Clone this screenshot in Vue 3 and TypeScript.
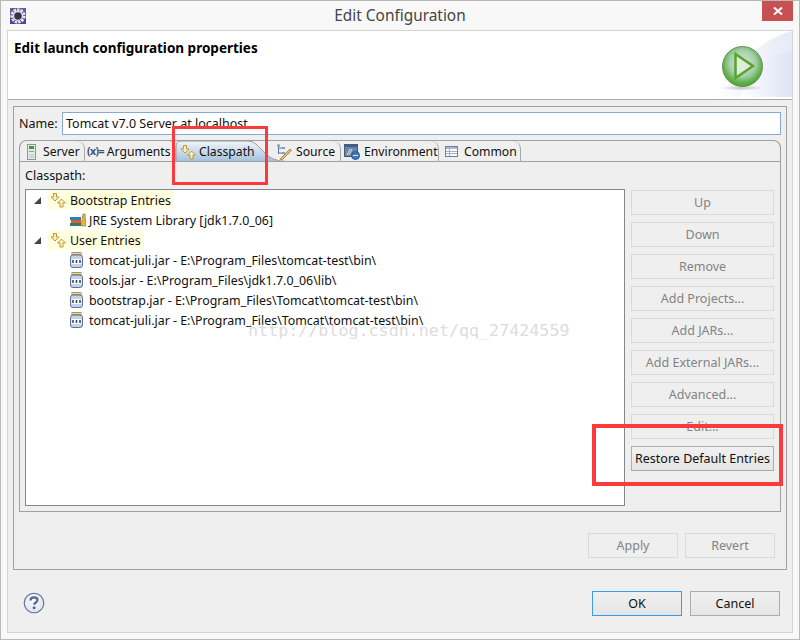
<script setup lang="ts">
const sideButtons = [
  'Up', 'Down', 'Remove', 'Add Projects...', 'Add JARs...',
  'Add External JARs...', 'Advanced...', 'Edit...'
]
const jars = [
  'tomcat-juli.jar - E:\\Program_Files\\tomcat-test\\bin\\',
  'tools.jar - E:\\Program_Files\\jdk1.7.0_06\\lib\\',
  'bootstrap.jar - E:\\Program_Files\\Tomcat\\tomcat-test\\bin\\',
  'tomcat-juli.jar - E:\\Program_Files\\Tomcat\\tomcat-test\\bin\\'
]
</script>

<template>
  <div class="window">
    <div class="titlebar">
      <svg class="app-icon" width="16" height="16" viewBox="0 0 16 16">
        <rect width="16" height="16" fill="#6a5a9c" />
        <rect y="10" width="16" height="6" fill="#5a3f92" />
        <circle cx="8" cy="8" r="6.300" fill="none" stroke="#ecebef" stroke-width="2.400" stroke-dasharray="2.500 1" />
        <circle cx="8" cy="8" r="5" fill="#f0eff3" />
        <circle cx="8" cy="8" r="3.800" fill="#35324a" />
      </svg>
      <div class="title">Edit Configuration</div>
      <div class="close">
        <svg width="10" height="10" viewBox="0 0 10 10">
          <path d="M1 1.500 9 8.500M9 1.500 1 8.500" stroke="#fff" stroke-width="2" />
        </svg>
      </div>
    </div>
    <div class="client">
      <div class="banner">
        <div class="banner-text">Edit launch configuration properties</div>
        <svg class="banner-art" width="78" height="68" viewBox="0 0 78 68">
          <defs>
            <linearGradient id="swoosh" x1="0" y1="0" x2="1" y2="0">
              <stop offset="0" stop-color="#fff" />
              <stop offset="1" stop-color="#e6eaf7" />
            </linearGradient>
            <linearGradient id="swoosh2" x1="0" y1="0" x2="1" y2="0">
              <stop offset="0" stop-color="#fff" />
              <stop offset="1" stop-color="#dde3f5" />
            </linearGradient>
            <radialGradient id="ball" cx="0.5" cy="0.42" r="0.6">
              <stop offset="0" stop-color="#d6e9d8" />
              <stop offset="0.55" stop-color="#a4cfa8" />
              <stop offset="0.82" stop-color="#5cb04a" />
              <stop offset="1" stop-color="#4ea322" />
            </radialGradient>
            <radialGradient id="shadow" cx="0.5" cy="0.5" r="0.5">
              <stop offset="0" stop-color="#999" stop-opacity="0.6" />
              <stop offset="1" stop-color="#999" stop-opacity="0" />
            </radialGradient>
          </defs>
          <path d="M0 66C20 56 28 30 40 20 52 10 66 3 78 0V66Z" fill="url(#swoosh)" />
          <path d="M26 66C36 46 40 28 52 25 60 23 70 22 78 21V66Z" fill="url(#swoosh2)" />
          <ellipse cx="28" cy="57" rx="22" ry="2.500" fill="url(#shadow)" />
          <circle cx="28.500" cy="35.500" r="20" fill="url(#ball)" stroke="#6d8f55" stroke-width="1" />
          <path d="M21.500 23 39 35 21.500 47Z" fill="#dcefd8" stroke="#5aa32e" stroke-width="2.500" />
        </svg>
      </div>
      <div class="body">
        <div class="group">
          <div class="name-row">
            <label class="name-label">Name:</label>
            <div class="name-input">Tomcat v7.0 Server at localhost</div>
          </div>
          <div class="folder">
            <div class="tabs">
              <div class="tab tab-server">
                <svg class="tab-icon" width="10" height="16" viewBox="0 0 10 16">
                  <rect x="0.500" y="0.500" width="8" height="15" fill="#e4ebe0" stroke="#8a9a86" />
                  <rect x="2" y="2" width="5" height="3" fill="#3d9a4a" />
                  <rect x="2" y="7" width="5" height="1" fill="#8aa0b0" />
                  <rect x="2" y="10" width="5" height="4" fill="#c8d6e6" />
                </svg>
                <span>Server</span>
              </div>
              <div class="tab tab-args">
                <span class="args-glyph">(x)=</span>
                <span>Arguments</span>
              </div>
              <div class="tab tab-active">
                <svg class="active-bg" width="108" height="22" viewBox="0 0 108 22">
                  <defs>
                    <linearGradient id="act" x1="0" y1="0" x2="0" y2="1">
                      <stop offset="0" stop-color="#f2f5f9" />
                      <stop offset="1" stop-color="#a3bfdc" />
                    </linearGradient>
                  </defs>
                  <path d="M0 22V6Q0 1 6 1H72C84 1 86 18 104 21H0Z" fill="url(#act)" />
                  <path d="M0 22V6Q0 1 6 1H72C84 1 86 18 104 21H108" fill="none" stroke="#9a9a9a" />
                </svg>
                <svg class="tab-icon icon-entry" width="16" height="16" viewBox="0 0 16 16">
                  <path d="M3.500 1.500h3V5H9L5 9 1 5h2.500Z" fill="#fbeeb8" stroke="#b89a40" />
                  <path d="M11.500 7 15.500 11H13v4h-3v-4H7.500Z" fill="#fbeeb8" stroke="#b89a40" />
                </svg>
                <span class="tab-label">Classpath</span>
              </div>
              <div class="tab tab-source">
                <svg class="tab-icon" width="16" height="16" viewBox="0 0 16 16">
                  <path d="M2.500 1v9M2.500 4H6M2.500 9H6" stroke="#5a7aa8" fill="none" />
                  <rect x="1" y="0.500" width="3" height="2" fill="#7f9cc4" />
                  <rect x="6" y="3" width="3" height="2" fill="#7f9cc4" />
                  <rect x="6" y="8" width="3" height="2" fill="#7f9cc4" />
                  <path d="M5 14 14 5l1.500 1.500-9 9L4 16Z" fill="#e3bd6a" stroke="#8e6f2c" stroke-width="0.700" />
                </svg>
                <span>Source</span>
              </div>
              <div class="tab tab-env">
                <svg class="tab-icon" width="16" height="16" viewBox="0 0 16 16">
                  <rect x="0.500" y="0.500" width="13" height="12" fill="#6f84a3" stroke="#445a7c" />
                  <rect x="1" y="1" width="12" height="2" fill="#3c5f96" />
                  <path d="M3 11 6 5M5 11 8 5" stroke="#dfe6f0" />
                  <circle cx="11.500" cy="11.500" r="4" fill="#3d78b8" stroke="#2d5a90" />
                  <rect x="9" y="11" width="5" height="1" fill="#dfe8f2" />
                </svg>
                <span>Environment</span>
              </div>
              <div class="tab tab-common">
                <svg class="tab-icon" width="14" height="12" viewBox="0 0 14 12">
                  <rect x="0.500" y="0.500" width="12" height="10" fill="#fff" stroke="#6c7f99" />
                  <rect x="1" y="1" width="11" height="2" fill="#a9b8cc" />
                  <path d="M1 5.500h11M1 7.500h11M4.500 3v7" stroke="#9fb0c6" />
                </svg>
                <span>Common</span>
              </div>
            </div>
            <div class="tab-page">
              <div class="cp-label">Classpath:</div>
              <div class="cp-main">
                <div class="tree">
                  <div class="row">
                    <span class="arrow"></span>
                    <span class="hl">
                      <svg class="tab-icon icon-entry" width="16" height="16" viewBox="0 0 16 16">
                        <path d="M3.500 1.500h3V5H9L5 9 1 5h2.500Z" fill="#fbeeb8" stroke="#b89a40" />
                        <path d="M11.500 7 15.500 11H13v4h-3v-4H7.500Z" fill="#fbeeb8" stroke="#b89a40" />
                      </svg>
                      Bootstrap Entries
                    </span>
                  </div>
                  <div class="row child">
                    <svg class="leaf-icon" width="16" height="14" viewBox="0 0 16 14">
                      <rect x="0" y="10" width="11" height="3" fill="#3f7a5a" />
                      <rect x="1" y="7" width="10" height="3" fill="#c8653a" />
                      <rect x="0" y="4" width="11" height="3" fill="#3c7aa8" />
                      <path d="M11 13 13 1h2l1 12Z" fill="#e3b53a" stroke="#8e6f2c" stroke-width="0.600" />
                    </svg>
                    <span>JRE System Library [jdk1.7.0_06]</span>
                  </div>
                  <div class="row">
                    <span class="arrow"></span>
                    <span class="hl">
                      <svg class="tab-icon icon-entry" width="16" height="16" viewBox="0 0 16 16">
                        <path d="M3.500 1.500h3V5H9L5 9 1 5h2.500Z" fill="#fbeeb8" stroke="#b89a40" />
                        <path d="M11.500 7 15.500 11H13v4h-3v-4H7.500Z" fill="#fbeeb8" stroke="#b89a40" />
                      </svg>
                      User Entries
                    </span>
                  </div>
                  <div v-for="jar in jars" :key="jar" class="row child">
                    <svg class="leaf-icon" width="16" height="16" viewBox="0 0 16 16">
                      <rect x="2" y="0.500" width="9" height="2" fill="#e6d9a8" stroke="#a89650" />
                      <rect x="0.500" y="3" width="12" height="12.500" rx="2.500" fill="#c4d3e6" stroke="#5e7396" />
                      <rect x="1.500" y="7" width="10" height="5" fill="#fff" />
                      <path d="M3 8v3M6.500 8v3M10 8v3" stroke="#28406a" stroke-width="1.500" />
                    </svg>
                    <span>{{ jar }}</span>
                  </div>
                </div>
                <div class="side">
                  <button v-for="b in sideButtons" :key="b" class="btn disabled" type="button">{{ b }}</button>
                  <button class="btn enabled" type="button">Restore Default Entries</button>
                </div>
              </div>
            </div>
          </div>
          <div class="apply-row">
            <button class="btn disabled apply" type="button">Apply</button>
            <button class="btn disabled apply" type="button">Revert</button>
          </div>
        </div>
        <div class="footer">
          <svg class="help" width="22" height="22" viewBox="0 0 22 22">
            <defs>
              <radialGradient id="helpbg" cx="0.5" cy="0.4" r="0.6">
                <stop offset="0" stop-color="#fbfbfd" />
                <stop offset="1" stop-color="#dfe3ea" />
              </radialGradient>
            </defs>
            <circle cx="11" cy="11" r="9.800" fill="url(#helpbg)" stroke="#56709a" stroke-width="1.100" />
            <path d="M7.500 8.500C7.500 6 9.300 5.300 11 5.300c2 0 3.500 1 3.500 2.800 0 2.400-3.300 2.400-3.300 4.700" fill="none" stroke="#516a94" stroke-width="2.200" />
            <circle cx="11.100" cy="15.700" r="1.500" fill="#516a94" />
          </svg>
          <div class="footer-buttons">
            <button class="btn enabled primary dlg" type="button">OK</button>
            <button class="btn enabled dlg" type="button">Cancel</button>
          </div>
        </div>
      </div>
    </div>
    <div class="red red-a"></div>
    <div class="red red-b"></div>
    <div class="watermark">http://blog.csdn.net/qq_27424559</div>
  </div>
</template>

<style scoped>
.window {
  position: relative;
  box-sizing: border-box;
  width: 800px;
  height: 640px;
  border: 1px solid #b9b9b9;
  background: #f8f8f8;
  display: flex;
  flex-direction: column;
  font-family: "Noto Sans", "Open Sans", sans-serif;
  font-size: 12.5px;
  color: #111;
  overflow: hidden;
}
.titlebar {
  height: 29px;
  flex: none;
  display: flex;
  align-items: flex-start;
  position: relative;
}
.app-icon {
  margin: 7px 0 0 9px;
}
.title {
  position: absolute;
  left: 0;
  right: 0;
  top: 4px;
  text-align: center;
  font-size: 15.400px;
  line-height: 22px;
  color: #444;
}
.close {
  position: absolute;
  right: 6px;
  top: 0;
  width: 31px;
  height: 20px;
  background: #c75050;
  display: flex;
  align-items: center;
  justify-content: center;
}
.client {
  flex: 1;
  margin: 0 6px 6px 6px;
  border: 1px solid #d4d4d4;
  display: flex;
  flex-direction: column;
  background: #efefef;
}
.banner {
  height: 68px;
  flex: none;
  background: #fff;
  border-bottom: 1px solid #a8a8a8;
  position: relative;
  overflow: hidden;
}
.banner-text {
  font-weight: 700;
  font-size: 13.500px;
  padding: 7px 0 0 6px;
  line-height: 20px;
  color: #000;
}
.banner-art {
  position: absolute;
  right: 0;
  top: 0;
}
.body {
  flex: 1;
  display: flex;
  flex-direction: column;
  padding: 6px 5px 0 5px;
}
.group {
  box-sizing: border-box;
  height: 464px;
  border: 1px solid #a0a0a0;
  padding: 5px 5px 0 5px;
}
.name-row {
  display: flex;
  align-items: center;
  height: 23px;
}
.name-label {
  width: 43px;
  flex: none;
}
.name-input {
  flex: 1;
  box-sizing: border-box;
  height: 23px;
  border: 1px solid #86a9d6;
  background: #fff;
  padding-left: 3px;
  line-height: 21px;
  white-space: nowrap;
}
.folder {
  margin-top: 5px;
  box-sizing: border-box;
  height: 372px;
  border: 1px solid #a0a0a0;
  border-top: none;
  border-radius: 8px 8px 0 0;
  display: flex;
  flex-direction: column;
}
.tabs {
  height: 22px;
  flex: none;
  display: flex;
  position: relative;
  box-sizing: border-box;
  margin: 0 -1px;
  border: 1px solid #a0a0a0;
  border-radius: 8px 8px 0 0;
  font-size: 12.200px;
}
.tab {
  box-sizing: border-box;
  height: 21px;
  display: flex;
  align-items: center;
  position: relative;
  white-space: nowrap;
  border-right: 1px solid #a8a8a8;
  border-top-right-radius: 8px;
}
.tab-icon,
.leaf-icon {
  flex: none;
}
.tab-server {
  width: 65px;
  padding-left: 7px;
  gap: 6px;
}
.tab-args {
  width: 91px;
  padding-left: 2px;
  gap: 3px;
}
.args-glyph {
  font-size: 10.500px;
  font-weight: 700;
  color: #3d4f78;
  letter-spacing: -0.6px;
  position: relative;
  top: -1px;
}
.tab-active {
  width: 92px;
  padding-left: 4px;
  gap: 3px;
  border-right: none;
  z-index: 1;
}
.active-bg {
  position: absolute;
  left: 0;
  top: -1px;
}
.tab-label {
  position: relative;
}
.icon-entry {
  position: relative;
}
.tab-source {
  width: 73px;
  padding-left: 8px;
  gap: 4px;
}
.tab-env {
  width: 98px;
  padding-left: 3px;
  gap: 4px;
}
.tab-common {
  width: 82px;
  padding-left: 6px;
  gap: 5px;
}
.tab-page {
  flex: 1;
  padding: 5px 5px 0 5px;
  display: flex;
  flex-direction: column;
}
.cp-label {
  height: 22px;
  line-height: 18px;
}
.cp-main {
  display: flex;
  gap: 6px;
}
.tree {
  box-sizing: border-box;
  width: 600px;
  height: 317px;
  border: 1px solid #828790;
  background: #fff;
  font-size: 12.400px;
}
.row {
  height: 20px;
  display: flex;
  align-items: center;
  white-space: nowrap;
  padding-left: 8px;
}
.child {
  padding-left: 44px;
  gap: 3px;
}
.arrow {
  width: 0;
  height: 0;
  border-style: solid;
  border-width: 0 0 7px 7px;
  border-color: transparent transparent #444 transparent;
  margin-right: 6px;
}
.hl {
  display: inline-flex;
  align-items: center;
  gap: 4px;
  height: 20px;
  background: #ffffdf;
  padding: 0 3px 0 3px;
}
.side {
  width: 143px;
  display: flex;
  flex-direction: column;
  gap: 7px;
  padding-top: 1px;
}
.btn {
  box-sizing: border-box;
  height: 25px;
  font: inherit;
  padding: 0;
  white-space: nowrap;
  cursor: default;
}
.disabled {
  background: #efefef;
  border: 1px solid #d9d9d9;
  color: #838383;
}
.enabled {
  border: 1px solid #adadad;
  background: linear-gradient(#f0f0f0, #e5e5e5);
  color: #111;
}
.primary {
  border-color: #3c9be8;
}
.apply-row {
  display: flex;
  justify-content: flex-end;
  gap: 7px;
  margin-top: 21px;
  padding-right: 6px;
}
.apply {
  width: 90px;
}
.footer {
  height: 62px;
  display: flex;
  justify-content: space-between;
  padding: 21px 7px 0 10px;
  box-sizing: border-box;
}
.help {
  margin-top: 1px;
}
.footer-buttons {
  display: flex;
  gap: 8px;
}
.dlg {
  width: 90px;
}
.red {
  position: absolute;
  box-sizing: border-box;
  border: 3px solid #fb3a3c;
  pointer-events: none;
  z-index: 5;
}
.red-a {
  left: 171px;
  top: 125px;
  width: 96px;
  height: 59px;
}
.red-b {
  left: 591px;
  top: 423px;
  width: 191px;
  height: 62px;
  border-width: 4px;
}
.watermark {
  position: absolute;
  left: 247px;
  top: 319px;
  font-family: "DejaVu Sans Mono", monospace;
  font-size: 16.700px;
  line-height: 20px;
  color: rgba(190, 190, 190, 0.55);
  pointer-events: none;
  white-space: nowrap;
}
</style>
